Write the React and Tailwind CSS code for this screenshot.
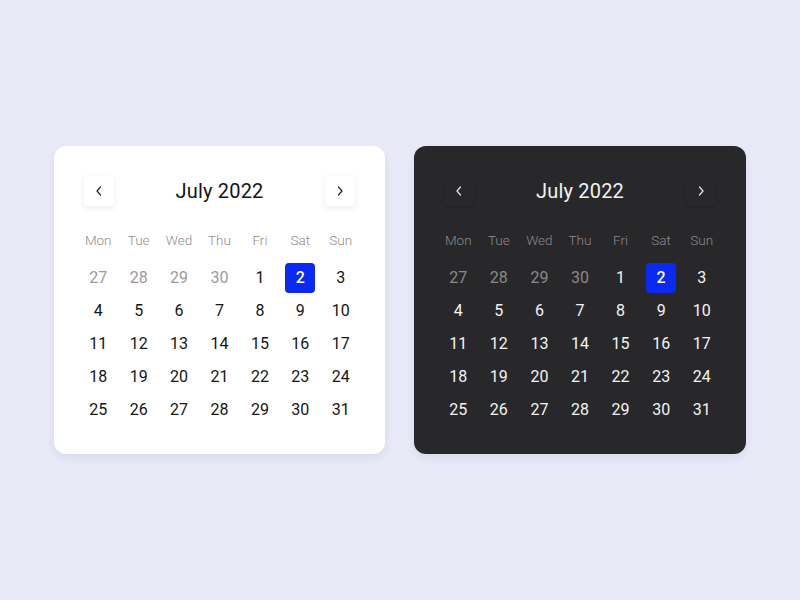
import React from "react";

const days = [
  { d: 27, muted: true }, { d: 28, muted: true }, { d: 29, muted: true }, { d: 30, muted: true },
  ...Array.from({ length: 31 }, (_, i) => ({ d: i + 1 })),
];

const weekdays = ["Mon", "Tue", "Wed", "Thu", "Fri", "Sat", "Sun"];

function Chevron({ dir }) {
  return (
    <svg width="8" height="10" viewBox="0 0 8 10" fill="none">
      <path
        d={dir === "left" ? "M5.5 1 L2 5 L5.5 9" : "M2.5 1 L6 5 L2.5 9"}
        stroke="currentColor"
        strokeWidth="1.25"
        strokeLinecap="round"
        strokeLinejoin="round"
      />
    </svg>
  );
}

function Calendar({ dark }) {
  const card = dark
    ? "bg-[#28282a] w-[332px]"
    : "bg-white w-[331px]";
  const navBtn = dark
    ? "bg-[#28282a] text-[#e0e0e0] shadow-[0_1px_3px_rgba(0,0,0,0.18)]"
    : "bg-white text-[#2a2a2a] shadow-[0_2px_6px_rgba(20,20,60,0.08)]";
  const title = dark ? "text-[#f2f2f2]" : "text-[#141414]";
  const label = dark ? "text-[#8a8a8a]" : "text-[#8e8e8e]";
  const dayText = dark ? "text-[#f3f3f3]" : "text-[#151515]";
  const mutedText = dark ? "text-[#8a8a8a]" : "text-[#9a9a9a]";

  return (
    <div
      className={`${card} h-[308px] rounded-[12px] px-[24px] pt-[30px] shadow-[0_4px_10px_rgba(40,40,90,0.08)] font-['Roboto',sans-serif]`}
    >
      <div className="flex items-center justify-between h-[30px] px-[6px]">
        <button className={`${navBtn} w-[30px] h-[30px] rounded-[4px] flex items-center justify-center`}>
          <Chevron dir="left" />
        </button>
        <div className={`${title} text-[20px] leading-none tracking-[0.2px]`}>July 2022</div>
        <button className={`${navBtn} w-[30px] h-[30px] rounded-[4px] flex items-center justify-center`}>
          <Chevron dir="right" />
        </button>
      </div>
      <div className="grid grid-cols-7 mt-[24px] h-[20px] items-center">
        {weekdays.map((w) => (
          <div key={w} className={`${label} text-[13.5px] font-light text-center`}>{w}</div>
        ))}
      </div>
      <div className="grid grid-cols-7 mt-[11px]">
        {days.map((x, i) => {
          const selected = !x.muted && x.d === 2;
          return (
            <div key={i} className="h-[33px] flex items-center justify-center">
              {selected ? (
                <div className="w-[30px] h-[30px] rounded-[4px] bg-[#0a29f2] text-white text-[16px] font-medium flex items-center justify-center">
                  {x.d}
                </div>
              ) : (
                <span className={`${x.muted ? mutedText : dayText} text-[16px]`}>{x.d}</span>
              )}
            </div>
          );
        })}
      </div>
    </div>
  );
}

export default function App() {
  return (
    <div className="w-[800px] h-[600px] bg-[#e8eaf8] flex justify-center gap-[29px] pt-[146px]">
      <Calendar />
      <Calendar dark />
    </div>
  );
}
